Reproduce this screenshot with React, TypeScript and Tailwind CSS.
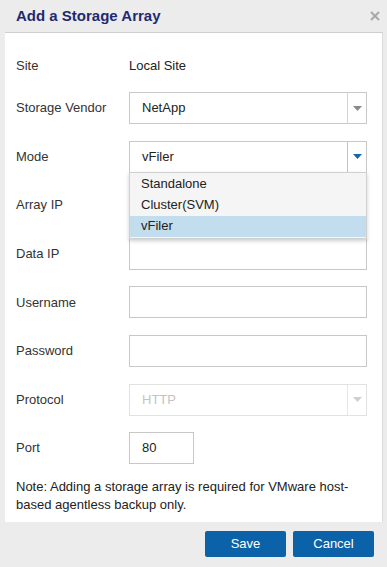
import React from 'react';

const font = { fontFamily: '"Liberation Sans", Arial, sans-serif' };

const Caret = ({ color }: { color: string }) => (
  <svg width="9" height="5" viewBox="0 0 9 5">
    <path d="M0 0h9L4.5 5z" fill={color} />
  </svg>
);

const Row = ({ label, children, className = '' }: { label: string; children?: React.ReactNode; className?: string }) => (
  <div className={`flex items-center h-[32px] ${className}`}>
    <div className="w-[113px] text-[13px] text-[#333]">{label}</div>
    {children}
  </div>
);

const TextBox = ({ w = 'w-[238px]', value = '' }: { w?: string; value?: string }) => (
  <div className={`${w} h-[32px] border border-[#c8c8c8] bg-white flex items-center pl-[12px] text-[13px] text-[#222]`}>
    {value}
  </div>
);

export default function App() {
  const options = ['Standalone', 'Cluster(SVM)', 'vFiler'];
  return (
    <div style={font} className="w-[387px] h-[567px] bg-[#ececec] flex flex-col overflow-hidden">
      <div className="h-[32px] flex items-center justify-between pl-[16px] pr-[6px] shrink-0">
        <div className="text-[15px] font-bold text-[#1e2a6e]">Add a Storage Array</div>
        <svg width="10" height="10" viewBox="0 0 10 10" className="mr-[1px]">
          <path d="M1 1L9 9M9 1L1 9" stroke="#a8a8a8" strokeWidth="2" />
        </svg>
      </div>
      <div className="flex-1 ml-[5px] mr-[4px] bg-white border-t border-[#cfcfcf] border-r border-r-[#dcdcdc] pl-[11px] pt-[17px]">
        <Row label="Site">
          <div className="text-[13px] text-[#222]">Local Site</div>
        </Row>
        <Row label="Storage Vendor" className="mt-[10px]">
          <div className="w-[238px] h-[32px] border border-[#c8c8c8] flex">
            <div className="flex-1 flex items-center pl-[12px] text-[13px] text-[#222]">NetApp</div>
            <div className="w-[19px] border-l border-[#d4d4d4] flex items-center justify-center">
              <Caret color="#8a8a8a" />
            </div>
          </div>
        </Row>
        <Row label="Mode" className="mt-[16.6px] relative z-10">
          <div className="relative w-[238px] h-[32px] border border-[#c8c8c8] border-b-[#7fb0dc] flex">
            <div className="flex-1 flex items-center pl-[12px] text-[13px] text-[#222]">vFiler</div>
            <div className="w-[19px] border-l border-[#a9cbe8] flex items-center justify-center">
              <Caret color="#1a66ad" />
            </div>
            <div className="absolute left-[-1px] top-full w-[238px] bg-[#f5f5f5] border border-[#d0d0d0] shadow-[0_2px_4px_rgba(0,0,0,0.2)] py-[1px]">
              {options.map(o => (
                <div
                  key={o}
                  className={`h-[21px] flex items-center pl-[11px] text-[13px] text-[#222] ${o === 'vFiler' ? 'bg-[#c1ddee]' : ''}`}
                >
                  {o}
                </div>
              ))}
            </div>
          </div>
        </Row>
        <Row label="Array IP" className="mt-[16.6px]">
          <TextBox />
        </Row>
        <Row label="Data IP" className="mt-[16.6px]">
          <TextBox />
        </Row>
        <Row label="Username" className="mt-[16.6px]">
          <TextBox />
        </Row>
        <Row label="Password" className="mt-[16.6px]">
          <TextBox />
        </Row>
        <Row label="Protocol" className="mt-[16.6px]">
          <div className="w-[238px] h-[32px] border border-[#e2e2e2] flex">
            <div className="flex-1 flex items-center pl-[12px] text-[13px] text-[#c4c4c4]">HTTP</div>
            <div className="w-[19px] border-l border-[#e6e6e6] flex items-center justify-center">
              <Caret color="#cfcfcf" />
            </div>
          </div>
        </Row>
        <Row label="Port" className="mt-[16.6px]">
          <TextBox w="w-[65px]" value="80" />
        </Row>
        <p className="mt-[14px] pr-[12px] text-[13px] leading-[18px] text-[#222]">
          Note: Adding a storage array is required for VMware host-based agentless backup only.
        </p>
      </div>
      <div className="h-[45px] shrink-0 flex justify-end items-start pt-[9px] pr-[13px] gap-[7px]">
        <button className="w-[81px] h-[26px] rounded-[2px] bg-[#0b62a8] text-white text-[13px]">Save</button>
        <button className="w-[81px] h-[26px] rounded-[2px] bg-[#0b62a8] text-white text-[13px]">Cancel</button>
      </div>
    </div>
  );
}
